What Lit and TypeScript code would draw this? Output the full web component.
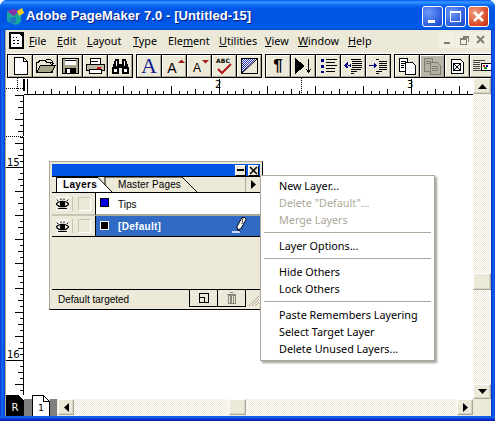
import { LitElement, html, css, svg } from "lit";
import { customElement } from "lit/decorators.js";

const ul = (t: string, i = 0) => html`${t.slice(0, i)}<u>${t[i]}</u>${t.slice(i + 1)}`;

const ic = (body: unknown, w = 21, h = 20) =>
  html`<svg width=${w} height=${h} viewBox="0 0 ${w} ${h}" shape-rendering="crispEdges">${body}</svg>`;

const bars = (rows: [number, number, number][], color = "#000") =>
  rows.map(([x, y, w]) => svg`<rect x=${x} y=${y} width=${w} height="1" fill=${color}/>`);

const tools = [
  [
    ic(svg`<path d="M4.5 1.5h9l4 4v13h-13z" fill="#fff" stroke="#000"/><path d="M13.5 1.5v4h4" fill="none" stroke="#000"/>`),
    ic(svg`<path d="M1.5 6.5h2l1-2h6l1 2h6v10h-16z" fill="#ece9d8" stroke="#000"/><path d="M1.5 16.5l4-7h15l-4 7z" fill="#a8a48c" stroke="#000"/><path d="M11 3h4l2 2v3M15 7l2 2 2-2" fill="none" stroke="#000"/>`),
    ic(svg`<rect x="2.5" y="2.5" width="16" height="15" fill="#a8a48c" stroke="#000"/><rect x="5" y="3" width="11" height="6" fill="#fff"/><rect x="5" y="12" width="11" height="6" fill="#000"/><rect x="7" y="13" width="3" height="4" fill="#fff"/><rect x="5" y="4" width="11" height="1" fill="#000"/>`),
    ic(svg`<rect x="5" y="2.5" width="10" height="6" fill="#fff" stroke="#000"/><rect x="1.5" y="8.5" width="18" height="6" fill="#bdb9a6" stroke="#000"/><rect x="4.5" y="13.5" width="12" height="4" fill="#fff" stroke="#000"/><rect x="12" y="11" width="4" height="2" fill="#d81818"/><rect x="6" y="5" width="7" height="1" fill="#000"/>`),
    ic(svg`<path d="M5 3h4v5h3V3h4l3 10v5h-7v-6H9v6H2v-5z" fill="#000"/><rect x="4" y="13" width="3" height="3" fill="#fff"/><rect x="14" y="13" width="3" height="3" fill="#fff"/><rect x="6" y="5" width="1" height="5" fill="#fff"/><rect x="14" y="5" width="1" height="5" fill="#fff"/>`),
  ],
  [
    html`<span class="a big">A</span>`,
    html`<span class="a mid">A</span>${ic(svg`<path d="M14 7h7l-3.500-3.500z" fill="#a01818" shape-rendering="auto"/>`, 21, 20)}`,
    html`<span class="a small">A</span>${ic(svg`<path d="M13 4h7l-3.500 3.500z" fill="#a01818" shape-rendering="auto"/>`, 21, 20)}`,
    html`<span class="abc">ABC</span>${ic(svg`<path d="M4 13l4 4 9-9" fill="none" stroke="#b01818" stroke-width="2" shape-rendering="auto"/>`)}`,
    ic(svg`<defs><pattern id="dth" width="2" height="2" patternUnits="userSpaceOnUse"><rect width="2" height="2" fill="#fff"/><rect width="1" height="1" fill="#2030b0"/><rect x="1" y="1" width="1" height="1" fill="#2030b0"/></pattern></defs><rect x="2.500" y="2.500" width="16" height="15" fill="#ece9d8" stroke="#000"/><path d="M3 3h15L3 17z" fill="url(#dth)"/><path d="M18 3L3 17" stroke="#000" shape-rendering="auto"/>`),
  ],
  [
    html`<span class="pilcrow">¶</span>`,
    ic(svg`<path d="M2 2l10 8-10 8z" fill="#000"/><path d="M15.500 3v13M13 13l2.500 3 2.500-3" fill="none" stroke="#000"/>`),
    ic(svg`<g fill="#000080"><rect x="3" y="3" width="3" height="3"/><rect x="3" y="9" width="3" height="3"/><rect x="3" y="15" width="3" height="2"/></g>${bars([[8,3,11],[8,6,9],[8,9,11],[8,12,9],[8,15,9]])}`),
    ic(svg`<path d="M1 9h6V8h1v3H7v-1H1zM4 6v6h1V6z" fill="#000080"/><path d="M1 9l3-3v7z" fill="#000080"/>${bars([[8,3,10],[9,5,10],[9,7,10],[9,9,10],[9,11,10],[8,13,10],[8,15,6],[8,17,3]])}`),
    ic(svg`<path d="M1 9h7v1H1zM6 6l3 3.500-3 3.500z" fill="#000080"/>${bars([[8,3,3],[11,5,8],[11,7,8],[11,9,8],[11,11,8],[11,13,8],[8,15,6],[8,17,3]])}`),
  ],
  [
    ic(svg`<path d="M2.500 2.500h8v13h-8z" fill="#fff" stroke="#000"/><path d="M8.500 6.500h7l3 3v9h-10z" fill="#fff" stroke="#000"/>${bars([[4,5,5],[4,7,5],[4,9,3],[4,11,3]])}`),
    ic(svg`<path d="M2.500 2.500h8v13h-8z" fill="#b4b1a2" stroke="#807e72"/><path d="M8.500 6.500h7l3 3v9h-10z" fill="#b4b1a2" stroke="#807e72"/>${bars([[4,5,5],[4,7,5],[10,10,6],[10,12,6],[10,14,6]], "#807e72")}`),
    ic(svg`<path d="M4.500 3.500h9l3 3v11h-12z" fill="#fff" stroke="#000"/><rect x="6.500" y="7.500" width="7" height="7" fill="#fff" stroke="#000"/><path d="M7 8l6 6M13 8l-6 6" stroke="#000"/>`),
    ic(svg`${bars([[1,4,12],[1,6,7],[1,8,7],[1,10,7],[1,12,7],[1,14,12]], "#444")}<rect x="9" y="7" width="10" height="7" fill="#fff" stroke="#000"/><rect x="11" y="9" width="2" height="2" fill="#d02020"/><rect x="14" y="9" width="2" height="2" fill="#0000c0"/><rect x="12" y="11" width="3" height="2" fill="#109010"/>`),
  ],
];

const eye = html`<svg width="13" height="13" viewBox="0 0 13 13"><path d="M0.500 7C2.500 3.500 10.500 3.500 12.500 7C10.500 10.500 2.500 10.500 0.500 7z" fill="#fff" stroke="#000" stroke-width="1.300"/><circle cx="6.500" cy="7" r="2.700" fill="#000"/><path d="M2 4L1 2.500M5 3V1.500M8 3V1.500M11 4l1-1.500" stroke="#000"/><path d="M2 11.500h9" stroke="#000"/></svg>`;

const menu: (string | { t: string; off?: boolean } | null)[] = [
  "New Layer...",
  { t: 'Delete "Default"...', off: true },
  { t: "Merge Layers", off: true },
  null,
  "Layer Options...",
  null,
  "Hide Others",
  "Lock Others",
  null,
  "Paste Remembers Layering",
  "Select Target Layer",
  "Delete Unused Layers...",
];

function hTicks() {
  const out = [];
  for (let k = 0; k * 8 + 27 < 473; k++) {
    const x = 27 + k * 8 - 24;
    let y = 13;
    if (k % 24 === 0) y = 1;
    else if (k % 6 === 0) y = 8;
    else if (k % 3 === 0) y = 11;
    out.push(svg`<rect x=${x} y=${y} width="1" height=${17 - y} fill="#000"/>`);
  }
  return out;
}

function vTicks() {
  const out = [];
  for (let k = -12; k * 6 + 167 < 399; k++) {
    const y = 167 + Math.round(k * 6.03) - 95;
    if (y < 0) continue;
    let x = 14;
    if (k % 32 === 0) x = 0;
    else if (k % 4 === 0) x = 9;
    else if (k % 2 === 0) x = 12;
    out.push(svg`<rect x=${x} y=${y} width=${18 - x} height="1" fill="#000"/>`);
  }
  return out;
}

@customElement("app-root")
export class AppRoot extends LitElement {
  static styles = css`
    :host { display: block; width: 495px; height: 421px; position: relative; overflow: hidden; background: #fff;
      font-family: "Noto Sans", "DejaVu Sans", sans-serif; font-size: 10.800px; color: #000; }
    * { box-sizing: border-box; }
    .window { width: 495px; height: 421px; display: flex; flex-direction: column;
      border-radius: 7px 7px 0 0; overflow: hidden; background: #0855dd; }
    .title { height: 30px; flex: none; display: flex; align-items: center; padding: 0 6px 0 6px;
      background: linear-gradient(180deg, #0058ee 0, #3a93ff 2px, #288eff 3px, #0f6af0 5px, #0055e5 9px, #0053e3 22px, #0060f0 26px, #0055e0 29px, #0046c8 30px); }
    .app { display: flex; margin-right: 2px; margin-top: 2px; }
    .title-text { flex: 1; font-family: "Liberation Sans", sans-serif; font-weight: bold; font-size: 13px; color: #fff;
      letter-spacing: .1px; text-shadow: 1px 1px #0a1f87; white-space: nowrap; margin-top: 1px; }
    .caps { display: flex; gap: 2px; margin-top: 3px; }
    .cap { width: 21px; height: 21px; border: 1px solid #fff; border-radius: 3px; position: relative;
      background: radial-gradient(circle at 30% 30%, #6d99f6, #2b5bde 70%, #1c3fb5); }
    .cap.close { background: radial-gradient(circle at 30% 30%, #f0a080, #de5030 60%, #b52f10); }
    .cap svg { display: block; }
    .body { flex: 1; display: flex; min-height: 0; background: linear-gradient(90deg, #0831d9 0, #166aee 2px, #0855dd 4px, #0831d9 5px); }
    .client { width: 486px; margin-left: 5px; border-left: 1px solid #aca899; background: #ece9d8; display: flex; flex-direction: column; }
    .side { width: 4px; background: linear-gradient(90deg, #0831d9, #0855dd 2px, #166aee 3px, #0831d9); }
    .foot { height: 5px; flex: none; background: linear-gradient(180deg, #0855dd, #166aee 1px, #0831d9 3px, #001ea0); }
    .menubar { height: 23px; flex: none; display: flex; align-items: center; position: relative; }
    .doc { width: 15px; height: 17px; margin: -3px 0 0 3px; background: #000; padding: 2px; flex: none; }
    .doc svg { display: block; }
    .items { display: grid; grid-template-columns: 28px 30px 46px 35px 51px 46px 33px 50px 40px; margin: -3px 0 0 5px; white-space: nowrap; }
    .items u { text-underline-offset: 1px; }
    .mdi { margin-left: auto; display: flex; gap: 1px; margin: -3px 2px 0 auto; }
    .mdi div { width: 16px; height: 16px; background: #f1efe2; }
    .mdi svg { display: block; }
    .toolbar { height: 25px; flex: none; display: flex; gap: 3px; padding: 0 0 0 1px; border-top: 1px solid #fff; overflow: hidden; }
    .group { display: flex; height: 24px; border: 1px solid #000; flex: none; gap: 1px; background: #000; }
    .tool { width: 24px; height: 22px; background: #ece9d8; border: 1px solid; border-color: #fff #aca899 #aca899 #fff;
      position: relative; display: flex; align-items: center; justify-content: center; }
    .tool.off { background: #b8b6aa; }
    .tool svg { position: relative; flex: none; }
    .tool:has(.a) svg, .tool:has(.abc) svg { position: absolute; left: 1px; top: 0; }
    .a { font-family: "Liberation Serif", serif; line-height: 18px; height: 18px; }
    .a.big { font-size: 22px; color: #101c90; }
    .a.mid { font-family: "Liberation Sans", sans-serif; font-size: 14px; margin-right: 4px; margin-top: 3px; line-height: 14px; height: 14px; }
    .a.small { font-family: "Liberation Sans", sans-serif; font-size: 12px; margin-right: 4px; margin-top: 4px; line-height: 12px; height: 12px; }
    .abc { position: absolute; top: 1px; left: 3px; font-size: 6px; letter-spacing: .2px; font-weight: bold; font-family: "DejaVu Sans", sans-serif; }
    .pilcrow { font-family: "Liberation Sans", sans-serif; font-weight: bold; font-size: 17px; }
    .work { flex: 1; min-height: 0; display: grid; grid-template-columns: 18px 449px 18px; grid-template-rows: 17px 304px 17px; }
    .corner { background: #fff; position: relative; }
    .corner svg, .hruler svg, .vruler svg { display: block; }
    .hruler, .vruler { background: #fff; }
    .page { background: #fff; }
    .dither { background: conic-gradient(#ece9d8 25%, #fff 0 50%, #ece9d8 0 75%, #fff 0) 0 0 / 2px 2px; }
    .vbar { display: flex; flex-direction: column; grid-row: 1 / 3; grid-column: 3; }
    .btn { background: #ece9d8; border: 1px solid; border-color: #fff #aca899 #aca899 #fff; box-shadow: inset -1px -1px #d8d4c4;
      display: flex; align-items: center; justify-content: center; flex: none; width: 18px; height: 16px; }
    .track { flex: 1; display: flex; flex-direction: column; }
    .track i { flex: 1; }
    .bottom { grid-column: 1 / 3; display: flex; position: relative; }
    .origin { width: 18px; height: 21px; margin-top: -4px; background: #000; color: #fff; font-size: 10px; text-align: center; padding-top: 7px; flex: none; position: relative; font-family: "DejaVu Sans", sans-serif; }
    .origin svg { position: absolute; right: 0; top: 0; display: block; }
    .gap { background: #808080; flex: none; }
    .sheet { width: 18px; height: 21px; margin-top: -4px; flex: none; position: relative; text-align: center; font-size: 9.500px; padding-top: 7px; font-family: "DejaVu Sans", sans-serif; }
    .sheet svg { position: absolute; left: 0; top: 0; display: block; }
    .sheet span { position: relative; }
    .hbar { flex: 1; display: flex; margin-left: 1px; }
    .hbar .btn { height: 16px; width: 16px; }
    .hbar i { display: block; }
    .grip { background: #ece9d8; }
    .panel { position: absolute; left: 49px; top: 161px; width: 214px; height: 149px; background: #ece9d8;
      border: 1px solid; border-color: #aca899 #000 #000 #aca899; padding: 2px; display: flex; flex-direction: column;
      font-family: "Liberation Sans", sans-serif; font-size: 10px; }
    .ptitle { height: 12px; flex: none; background: #0055e5; display: flex; justify-content: flex-end; align-items: center; gap: 2px; padding-right: 1px; }
    .pbtn { width: 11px; height: 11px; background: #ece9d8; border: 1px solid; border-color: #fff #000 #000 #fff; display: flex; align-items: center; justify-content: center; }
    .pbtn svg { display: block; }
    .tabs { height: 17px; flex: none; border-top: 1px solid #000; border-bottom: 1px solid #000; position: relative; display: flex; }
    .tabs svg { position: absolute; left: 0; top: 0; }
    .tab { position: relative; margin-top: 2px; white-space: nowrap; }
    .tab.on { margin-left: 11px; font-weight: bold; width: 55px; letter-spacing: .3px; }
    .tab.other { width: 100px; letter-spacing: .1px; }
    .row { display: flex; height: 23px; flex: none; }
    .eyes { width: 44px; flex: none; border-right: 1px solid #000; display: flex; align-items: center; padding-left: 4px;
      border-bottom: 2px solid #c9c5b4; }
    .eyebox { width: 13px; height: 15px; background: #f5f4ec; display: flex; justify-content: center; align-items: center; flex: none; }
    .eyes em { display: block; width: 1px; height: 14px; background: #c9c5b4; margin: 0 5px 0 3px; flex: none; }
    .eyes b { display: block; width: 13px; height: 14px; border: 1px solid; border-color: #c9c5b4 #fff #fff #c9c5b4; flex: none; }
    .lname { flex: 1; display: flex; align-items: center; gap: 9px; padding-left: 4px; background: #fff; border-bottom: 2px solid #aca899; }
    .lname .nm { margin-top: 1px; }
    .swatch { width: 9px; height: 9px; border: 1px solid #000; background: #0000e0; flex: none; margin-top: -2px; }
    .row.sel { height: 21px; border-bottom: 1px solid #000; }
    .row.sel .lname { background: #316ac5; color: #fff; font-weight: bold; border-bottom: 0; position: relative; letter-spacing: .3px; }
    .row.sel .nm { margin-top: 0; }
    .row.sel .swatch { background: #000; border: 1px solid #fff; }
    .row.sel .eyes { border-bottom: 0; }
    .pen { position: absolute; right: 13px; top: 1px; display: block; }
    .fill { flex: 1; border-bottom: 1px solid #000; }
    .status { height: 17px; flex: none; display: flex; align-items: center; padding-left: 6px; }
    .status span { flex: 1; margin-top: 1px; }
    .sbtn { width: 29px; height: 17px; border: 1px solid #000; margin-left: -1px; margin-top: -1px; border-top: 0; display: flex; align-items: center; justify-content: center; }
    .sgrip { width: 14px; height: 16px; display: block; }
    .pop { position: absolute; left: 260px; top: 175px; width: 175px; height: 186px; background: #fff;
      border: 1px solid #aca899; box-shadow: 2px 2px 2px rgba(90,88,75,.55); padding: 1px 3px 3px; }
    .mi { height: 17px; line-height: 17px; padding-left: 15px; white-space: nowrap; }
    .mi.off { color: #aca899; }
    .sep { height: 1px; background: #aca899; margin: 4px 0 4px; }
  `;

  render() {
    const up = html`<svg width="9" height="5"><path d="M4.500 0L9 5H0z" /></svg>`;
    const down = html`<svg width="9" height="5"><path d="M0 0h9L4.500 5z" /></svg>`;
    const left = html`<svg width="5" height="9"><path d="M5 0v9L0 4.500z" /></svg>`;
    const right = html`<svg width="5" height="9"><path d="M0 0v9l5-4.500z" /></svg>`;
    return html`
      <div class="window">
        <div class="title">
          <span class="app">${ic(svg`<path d="M1 4l7-2 5 2 3-3 2 5-3 2v7l-5 3-5-2-4-2z" fill="#18a8a0" shape-rendering="auto"/><path d="M1 4l7-2 5 2-5 5z" fill="#8a30a8" shape-rendering="auto"/><path d="M11 4l5-3 2 5-5 3z" fill="#f0c828" shape-rendering="auto"/><path d="M3 11l7-1v6l-5 1z" fill="#1a7ac0" shape-rendering="auto"/>`, 18, 18)}</span>
          <span class="title-text">Adobe PageMaker 7.0 - [Untitled-15]</span>
          <div class="caps">
            <div class="cap">${ic(svg`<rect x="5" y="13" width="7" height="3" fill="#fff"/>`, 19, 19)}</div>
            <div class="cap">${ic(svg`<rect x="4.500" y="4.500" width="10" height="10" fill="none" stroke="#fff"/><rect x="4" y="4" width="11" height="2" fill="#fff"/>`, 19, 19)}</div>
            <div class="cap close">${ic(svg`<path d="M5 5l9 9M14 5l-9 9" stroke="#fff" stroke-width="2.500" fill="none" shape-rendering="auto"/>`, 19, 19)}</div>
          </div>
        </div>
        <div class="body">
          <div class="client">
            <div class="menubar">
              <div class="doc">${ic(svg`<path d="M0 0h8l3 3v10H0z" fill="#fff"/><path d="M2 3h1v1H2zM5 3h1v1H5zM2 6h2v1H2zM6 6h2v1H6zM2 9h2v1H2zM6 9h2v1H6z" fill="#000"/>`, 11, 13)}</div>
              <div class="items">
                <span>${ul("File")}</span><span>${ul("Edit")}</span><span>${ul("Layout")}</span><span>${ul("Type")}</span>
                <span>${ul("Element", 3)}</span><span>${ul("Utilities")}</span><span>${ul("View")}</span><span>${ul("Window")}</span><span>${ul("Help")}</span>
              </div>
              <div class="mdi">
                <div>${ic(svg`<rect x="5" y="10" width="6" height="2" fill="#807e72"/>`, 16, 16)}</div>
                <div>${ic(svg`<path d="M6.500 4.500h6v5M4.500 6.500h6v6h-6zM4.500 7.500h6M6.500 5.500h6" fill="none" stroke="#807e72"/>`, 16, 16)}</div>
                <div>${ic(svg`<path d="M4 4l7 7M11 4l-7 7" stroke="#807e72" stroke-width="2" shape-rendering="auto"/>`, 16, 16)}</div>
              </div>
            </div>
            <div class="toolbar">
              ${tools.map(
                (g, gi) => html`<div class="group">${g.map((t, i) => html`<div class="tool ${gi === 3 && i === 1 ? "off" : ""}">${t}</div>`)}</div>`
              )}
            </div>
            <div class="work">
              <div class="corner">
                <svg width="18" height="17" shape-rendering="crispEdges"><path d="M11.500 0v14" stroke="#000" stroke-dasharray="1 1" /><path d="M0 10.500h18" stroke="#000" stroke-dasharray="1 1" /><rect x="17" y="1" width="1" height="12" /></svg>
              </div>
              <div class="hruler">
                <svg width="449" height="17" shape-rendering="crispEdges">
                  <rect y="16" width="449" height="1" />
                  ${hTicks()}
                  <rect x="0" y="1" width="1" height="12" />
                  <rect x="277" y="0" width="1" height="17" fill="#fff" />
                  <path d="M277.500 0v17" stroke="#000" stroke-dasharray="1 1" />
                  <text x="191" y="10" font-size="10" font-family="DejaVu Sans">2</text>
                  <text x="383" y="10" font-size="10" font-family="DejaVu Sans">3</text>
                </svg>
              </div>
              <div class="vbar">
                <div class="btn">${up}</div>
                <div class="track dither">
                  <i style="flex:none;height:179px"></i>
                  <div class="btn" style="height:17px"></div>
                </div>
                <div class="btn" style="height:15px">${down}</div>
              </div>
              <div class="vruler">
                <svg width="18" height="304" shape-rendering="crispEdges">
                  <rect x="17" width="1" height="304" />
                  <rect x="11" y="0" width="7" height="1" />
                  ${vTicks()}
                  <rect x="0" y="41" width="18" height="1" fill="#fff" />
                  <path d="M0 41.500h18" stroke="#000" stroke-dasharray="1 1" />
                  <text x="1" y="71" font-size="10" font-family="DejaVu Sans">15</text>
                  <text x="1" y="263" font-size="10" font-family="DejaVu Sans">16</text>
                </svg>
              </div>
              <div class="page"></div>
              <div class="bottom">
                <div class="origin">${ic(svg`<path d="M0 0h6v6z" fill="#fff"/><path d="M0 0v6h6z" fill="#000"/>`, 6, 6)}R</div>
                <div class="gap" style="width:8px"></div>
                <div class="sheet"><svg width="18" height="21" shape-rendering="crispEdges"><path d="M.5 21V.5h11l6 6V21" fill="#fff" stroke="#000" /><path d="M11.500 .5v6h6" fill="none" stroke="#000" /></svg><span>1</span></div>
                <div class="gap" style="width:7px"></div>
                <div class="hbar">
                  <div class="btn">${left}</div>
                  <i class="dither" style="flex:1"></i>
                  <div class="btn" style="width:17px"></div>
                  <i class="dither" style="width:211px"></i>
                  <div class="btn">${right}</div>
                </div>
              </div>
              <div class="grip"></div>
            </div>
          </div>
          <div class="side"></div>
        </div>
        <div class="foot"></div>
      </div>

      <div class="panel">
        <div class="ptitle">
          <div class="pbtn">${ic(svg`<rect x="1" y="3" width="7" height="2" fill="#000"/>`, 9, 9)}</div>
          <div class="pbtn">${ic(svg`<path d="M1 1l7 7M8 1l-7 7" stroke="#000" stroke-width="1.500" shape-rendering="auto"/>`, 9, 9)}</div>
        </div>
        <div class="tabs">
          <svg width="210" height="15">
            <path d="M53 15V0H130L145 15" fill="#ece9d8" stroke="#000" />
            <path d="M4.500 15V0.500H46L60 15z" fill="#fff" stroke="#000" />
            <path d="M5 14.500h54" stroke="#fff" />
            <rect x="193" y="0" width="16" height="15" fill="#ece9d8" />
            <path d="M193.500 0v15" stroke="#aca899" />
            <path d="M199 3v9l5-4.500z" fill="#000" />
          </svg>
          <span class="tab on">Layers</span>
          <span class="tab other">Master Pages</span>
        </div>
        <div class="row">
          <div class="eyes"><span class="eyebox">${eye}</span><em></em><b></b></div>
          <div class="lname"><span class="swatch"></span><span class="nm">Tips</span></div>
        </div>
        <div class="row sel">
          <div class="eyes"><span class="eyebox">${eye}</span><em></em><b></b></div>
          <div class="lname"><span class="swatch"></span><span class="nm">[Default]</span>
            <svg class="pen" width="15" height="16" viewBox="0 0 15 16"><path d="M10 .500h3l1 2-5 9-3.500 1.500L5 9.500z" fill="#fff" stroke="#000"/><path d="M11 1l-1 6" stroke="#000" stroke-width=".7"/><path d="M0 15h8" stroke="#fff" stroke-width="1.500"/><path d="M8 14.500l-1.500-1.500" stroke="#000"/></svg>
          </div>
        </div>
        <div class="fill"></div>
        <div class="status">
          <span>Default targeted</span>
          <div class="sbtn">${ic(svg`<rect x="1.500" y="1.500" width="9" height="9" fill="none" stroke="#000"/><rect x="1.500" y="5.500" width="5" height="5" fill="none" stroke="#000"/>`, 12, 12)}</div>
          <div class="sbtn">${ic(svg`<path d="M2 3h9M5 1.500h3M3 4.500v8h7v-8z M5 5v7M6.500 5v7M8 5v7" fill="none" stroke="#8a887a"/>`, 13, 13)}</div>
          <svg class="sgrip" viewBox="0 0 14 16"><path d="M3 15l10-10M6 15l7-7M9 15l4-4" stroke="#aca899" /></svg>
        </div>
      </div>

      <div class="pop">
        ${menu.map((m) =>
          m === null
            ? html`<div class="sep"></div>`
            : typeof m === "string"
            ? html`<div class="mi">${m}</div>`
            : html`<div class="mi off">${m.t}</div>`
        )}
      </div>
    `;
  }
}
